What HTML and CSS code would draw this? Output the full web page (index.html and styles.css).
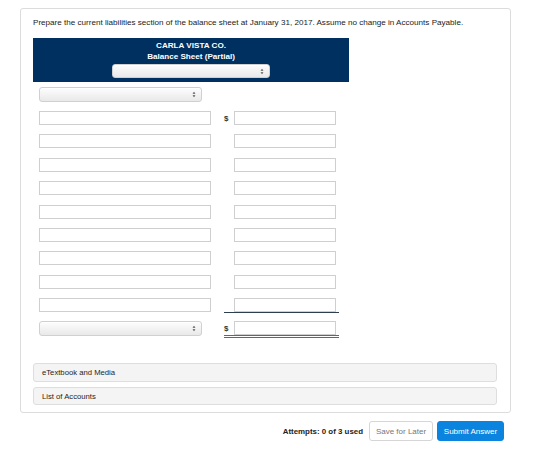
FILE: index.html
```html
<!DOCTYPE html>
<html lang="en">
<head>
<meta charset="utf-8">
<title>Current Liabilities</title>
<link rel="stylesheet" href="styles.css">
</head>
<body>
<div class="question">
  <p class="prompt">Prepare the current liabilities section of the balance sheet at January 31, 2017. Assume no change in Accounts Payable.</p>

  <div class="sheet-head">
    <div class="co">CARLA VISTA CO.</div>
    <div class="co">Balance Sheet (Partial)</div>
    <div class="picker picker-head"><svg class="arrows" viewBox="0 0 6 10"><path d="M3 1 L5.2 4 H0.8 Z M3 9 L5.2 6 H0.8 Z"/></svg></div>
  </div>

  <div class="lines">
    <div class="picker picker-title"><svg class="arrows" viewBox="0 0 6 10"><path d="M3 1 L5.2 4 H0.8 Z M3 9 L5.2 6 H0.8 Z"/></svg></div>

    <div class="rows">
      <div class="row"><input class="label-box"><div class="amt"><span class="cur">$</span><input class="num"></div></div>
      <div class="row"><input class="label-box"><div class="amt"><span class="cur"></span><input class="num"></div></div>
      <div class="row"><input class="label-box"><div class="amt"><span class="cur"></span><input class="num"></div></div>
      <div class="row"><input class="label-box"><div class="amt"><span class="cur"></span><input class="num"></div></div>
      <div class="row"><input class="label-box"><div class="amt"><span class="cur"></span><input class="num"></div></div>
      <div class="row"><input class="label-box"><div class="amt"><span class="cur"></span><input class="num"></div></div>
      <div class="row"><input class="label-box"><div class="amt"><span class="cur"></span><input class="num"></div></div>
      <div class="row"><input class="label-box"><div class="amt"><span class="cur"></span><input class="num"></div></div>
      <div class="row"><input class="label-box"><div class="amt amt-sub"><span class="cur"></span><input class="num"></div></div>
    </div>

    <div class="row row-total">
      <div class="picker picker-total"><svg class="arrows" viewBox="0 0 6 10"><path d="M3 1 L5.2 4 H0.8 Z M3 9 L5.2 6 H0.8 Z"/></svg></div>
      <div class="amt amt-total"><span class="cur">$</span><input class="num"></div>
    </div>
  </div>

  <div class="panels">
    <div class="panel">eTextbook and Media</div>
    <div class="panel">List of Accounts</div>
  </div>
</div>

<div class="actions">
  <span class="attempts">Attempts: 0 of 3 used</span>
  <button class="btn btn-save">Save for Later</button>
  <button class="btn btn-submit">Submit Answer</button>
</div>
</body>
</html>
```

FILE: styles.css
```css
* { box-sizing: border-box; }

body {
  margin: 0;
  background: #fff;
  font-family: "Liberation Sans", Arial, sans-serif;
  color: #222;
}

.question {
  margin: 8px 0 0 20px;
  width: 491px;
  border: 1px solid #dcdcdc;
  border-radius: 3px;
  padding: 9px 13px 7px 12px;
}

.prompt {
  margin: 0 0 10px;
  font-size: 8.1px;
  line-height: 10px;
  color: #222;
  white-space: nowrap;
}

.sheet-head {
  width: 316px;
  background: #00305f;
  color: #fff;
  padding: 2px 0 4px;
  display: flex;
  flex-direction: column;
  align-items: center;
}

.co {
  font-size: 8.1px;
  font-weight: bold;
  line-height: 11px;
}

.picker {
  position: relative;
  height: 14px;
  border: 1px solid #d0d0d0;
  border-radius: 3px;
  background: linear-gradient(#fdfdfd, #e9e9e9);
  box-shadow: inset 0 1px 0 #fff;
}

.arrows {
  position: absolute;
  right: 5px;
  top: 3px;
  width: 4px;
  height: 7px;
  fill: #555;
}

.picker-head {
  width: 158px;
  margin-top: 2px;
}

.lines {
  padding-left: 6px;
}

.picker-title {
  width: 163px;
  height: 15px;
  margin-top: 5px;
}

.rows {
  display: flex;
  flex-direction: column;
  gap: 9.4px;
  margin-top: 9px;
}

.row {
  display: flex;
  align-items: flex-start;
}

input {
  display: block;
  margin: 0;
  padding: 0;
  height: 14px;
  border: 1px solid #cfcfcf;
  border-radius: 0;
  background: #fff;
  outline: none;
}

.label-box {
  width: 172px;
}

.amt {
  display: flex;
  align-items: center;
  width: 115px;
  margin-left: 13px;
  padding-right: 3px;
}

.cur {
  width: 10px;
  font-size: 8px;
  font-weight: bold;
  color: #333;
}

.num {
  width: 102px;
}

.amt-sub {
  border-bottom: 1px solid #2d3e50;
}

.row-total {
  margin-top: 8px;
}

.picker-total {
  width: 163px;
  height: 15px;
  margin-right: 9px;
}

.amt-total {
  border-bottom: 3px double #666;
}

.panels {
  margin-top: 25px;
  display: flex;
  flex-direction: column;
  gap: 5px;
}

.panel {
  height: 18.5px;
  line-height: 17px;
  padding-left: 8px;
  background: #f4f4f4;
  border: 1px solid #dedede;
  border-radius: 3px;
  font-size: 7.7px;
  color: #1e1e1e;
}

.actions {
  width: 504px;
  margin-top: 8px;
  display: flex;
  justify-content: flex-end;
  align-items: center;
  gap: 4px;
}

.attempts {
  font-size: 7.9px;
  font-weight: bold;
  color: #222;
  margin-right: 2px;
}

.btn {
  height: 20px;
  padding: 0;
  border-radius: 3px;
  font-family: "Liberation Sans", Arial, sans-serif;
  font-size: 8px;
  cursor: pointer;
}

.btn-save {
  width: 64px;
  background: #fff;
  border: 1px solid #d6d6d6;
  color: #777;
}

.btn-submit {
  width: 67px;
  background: #0b84e0;
  border: 1px solid #0b84e0;
  color: #fff;
}
```
